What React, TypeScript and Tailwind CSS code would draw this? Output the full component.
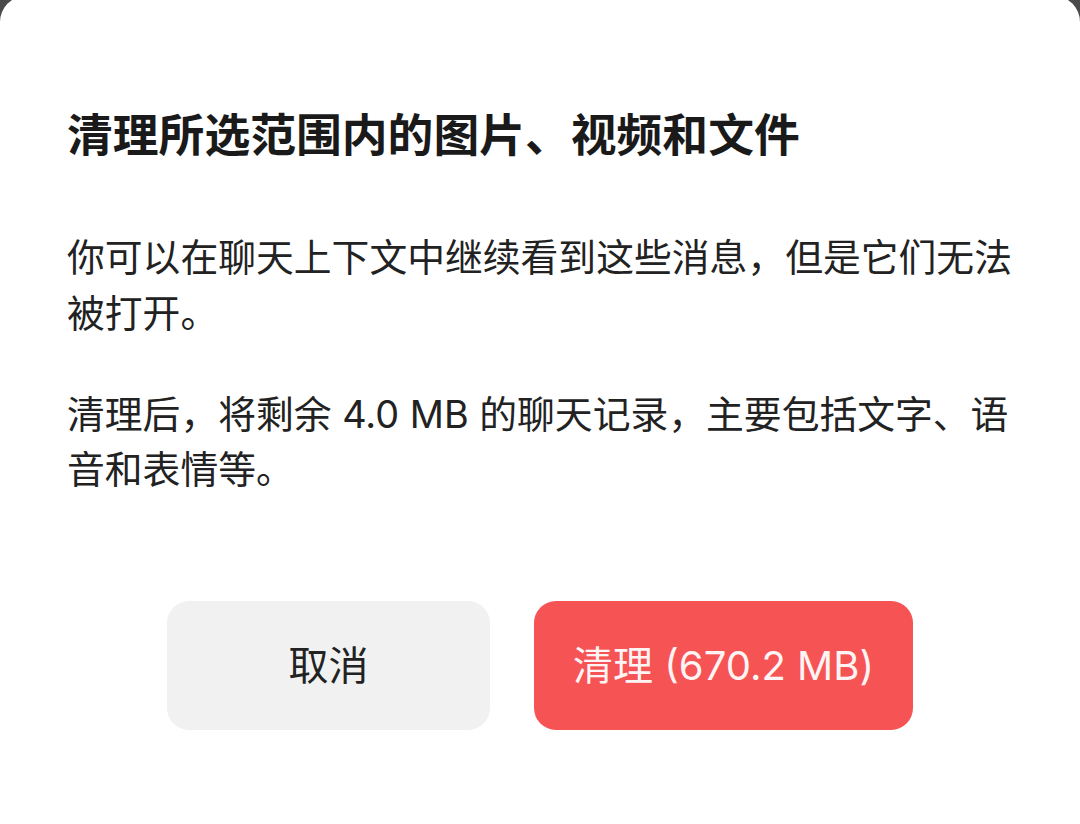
const font = "font-['Inter','Noto_Sans_CJK_SC','Noto_Sans',sans-serif]";

export default function App() {
  return (
    <div className="h-[824px] w-[1080px] overflow-hidden bg-[#4a4a4a]">
      <div
        className={`-mt-[4px] flex h-[828px] flex-col rounded-t-[26px] bg-white pt-[110px] pl-[67px] pr-[64px] ${font}`}
      >
        <h1 className="text-[45.8px] leading-[60px] font-bold text-[#1a1a1a]">
          清理所选范围内的图片、视频和文件
        </h1>
        <p className="mt-[63px] text-[37.8px] leading-[56px] text-[#222]">
          你可以在聊天上下文中继续看到这些消息，但是它们无法被打开。
        </p>
        <p className="mt-[46px] text-[37.8px] leading-[55px] text-[#222]">
          清理后，将剩余 4.0 MB 的聊天记录，主要包括文字、语音和表情等。
        </p>
        <div className="mt-[104px] -ml-[67px] -mr-[64px] flex justify-center gap-[44px]">
          <button className="flex h-[129px] w-[323px] items-center justify-center rounded-[22px] bg-[#f1f1f1] text-[40px] text-[#222]">
            取消
          </button>
          <button className="flex h-[129px] w-[379px] items-center justify-center rounded-[22px] bg-[#f65354] text-[40px] text-[#fff4f4]">
            清理 (670.2 MB)
          </button>
        </div>
      </div>
    </div>
  );
}
